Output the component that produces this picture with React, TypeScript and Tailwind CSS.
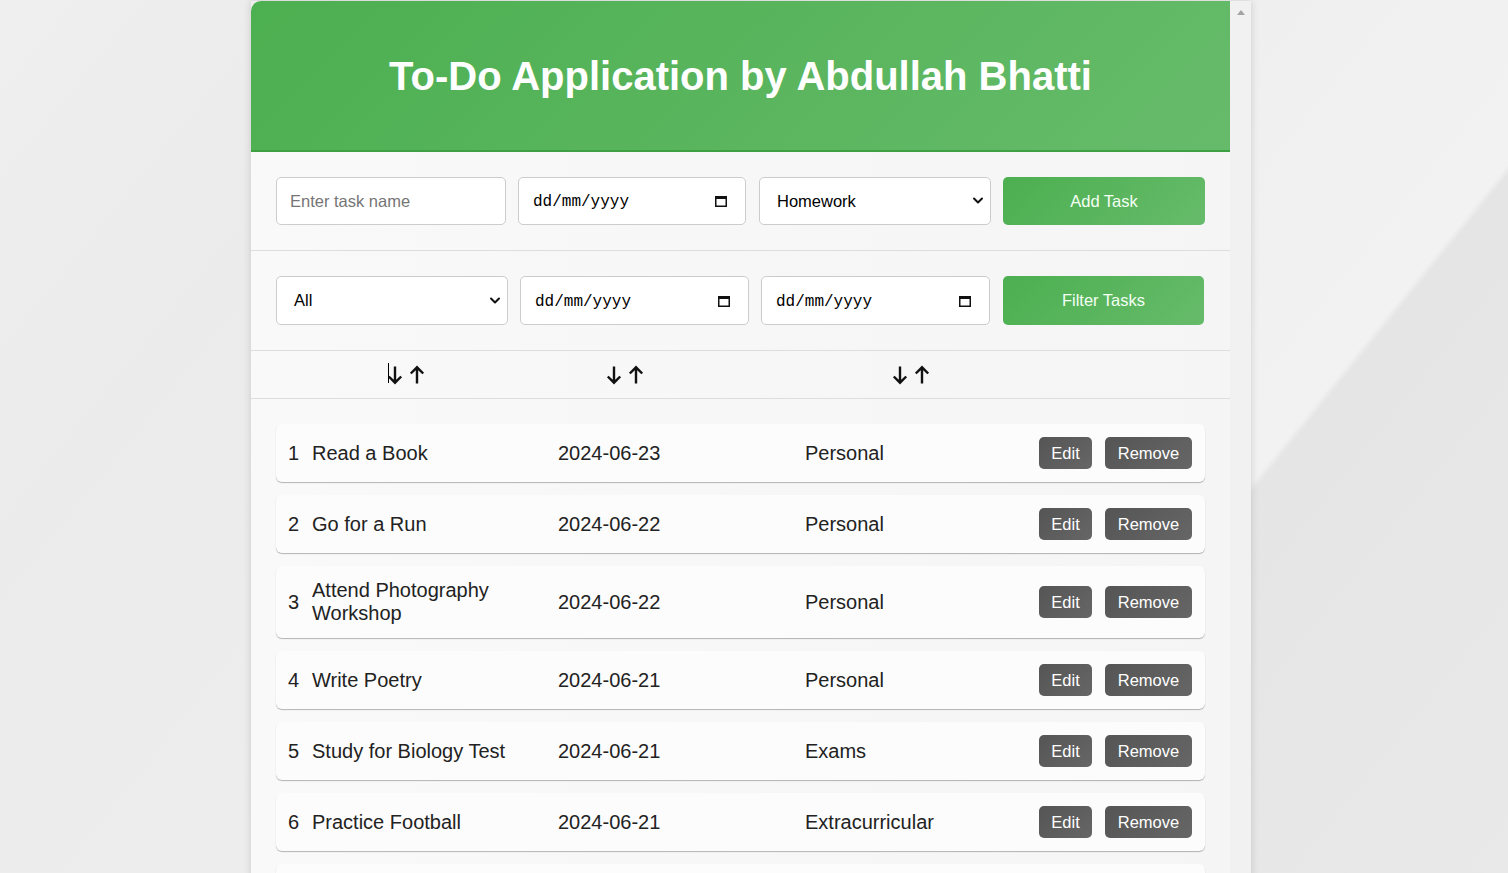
import React from "react";

const tasks = [
  { n: 1, name: "Read a Book", date: "2024-06-23", cat: "Personal" },
  { n: 2, name: "Go for a Run", date: "2024-06-22", cat: "Personal" },
  { n: 3, name: "Attend Photography Workshop", date: "2024-06-22", cat: "Personal" },
  { n: 4, name: "Write Poetry", date: "2024-06-21", cat: "Personal" },
  { n: 5, name: "Study for Biology Test", date: "2024-06-21", cat: "Exams" },
  { n: 6, name: "Practice Football", date: "2024-06-21", cat: "Extracurricular" },
  { n: 7, name: "Science Project", date: "2024-06-20", cat: "Homework" },
];

function Calendar() {
  return (
    <svg width="14" height="14" viewBox="0 0 14 14" className="shrink-0">
      <rect x="1.75" y="2.75" width="10.5" height="9.5" fill="none" stroke="#111" strokeWidth="1.5" />
      <rect x="1" y="2" width="12" height="3" fill="#111" />
    </svg>
  );
}

function Chevron() {
  return (
    <svg width="12" height="8" viewBox="0 0 12 8" className="shrink-0">
      <path d="M2 1.5l4 4 4-4" fill="none" stroke="#111" strokeWidth="2" strokeLinecap="round" strokeLinejoin="round" />
    </svg>
  );
}

function DateBox({ w, h }: { w: string; h: string }) {
  return (
    <div className={`${w} ${h} bg-white border border-[#cccccc] rounded-[5px] flex items-center justify-between pl-[14px] pr-[17px]`}>
      <span className="text-[16px] text-black pt-[2px]" style={{ fontFamily: '"Liberation Mono", monospace' }}>dd/mm/yyyy</span>
      <Calendar />
    </div>
  );
}

function SelectBox({ w, h, label }: { w: string; h: string; label: string }) {
  return (
    <div className={`${w} ${h} bg-white border border-[#cccccc] rounded-[5px] flex items-center justify-between pl-[17px] pr-[6px]`}>
      <span className="text-[16.5px] text-black">{label}</span>
      <Chevron />
    </div>
  );
}

function Arrows() {
  return (
    <div className="flex items-center gap-[6px]">
      <svg width="16" height="20" viewBox="0 0 16 20">
        <path d="M8 1.5v16M1.8 11.5l6.2 6.2 6.2-6.2" fill="none" stroke="#111" strokeWidth="2.4" />
      </svg>
      <svg width="16" height="20" viewBox="0 0 16 20">
        <path d="M8 18.5v-16M1.8 8.5l6.2-6.2 6.2 6.2" fill="none" stroke="#111" strokeWidth="2.4" />
      </svg>
    </div>
  );
}

export default function App() {
  return (
    <div
      className="h-[873px] w-[1508px] overflow-hidden bg-[linear-gradient(128.8deg,#efefef_0%,#ebebeb_20%,#eeeeee_50%,#f2f2f2_74.2%,#e5e5e5_74.6%,#e9e9e9_100%)]"
      style={{ fontFamily: '"Liberation Sans", Arial, sans-serif' }}
    >
      <div className="ml-[251px] mt-[1px] w-[1000px] h-[900px] flex shadow-[0_0_8px_rgba(0,0,0,0.15)]">
        <div className="w-[979px] bg-[linear-gradient(90deg,#f9f9f9,#f5f5f5)] rounded-tl-[10px]">
          <div className="h-[151px] rounded-tl-[10px] bg-[linear-gradient(135deg,#4caf50,#66bb6a)] border-b-2 border-[#3f9f43] flex items-center justify-center">
            <h1 className="text-white font-bold text-[40px] leading-none mt-[1px]">To-Do Application by Abdullah Bhatti</h1>
          </div>

          <div className="px-[25px] py-[25px] border-b border-[#dddddd] flex items-center">
            <div className="w-[230px] h-[48px] bg-white border border-[#cccccc] rounded-[5px] flex items-center pl-[13px]">
              <span className="text-[16.5px] text-[#757575]">Enter task name</span>
            </div>
            <div className="ml-[12px]">
              <DateBox w="w-[228px]" h="h-[48px]" />
            </div>
            <div className="ml-[13px]">
              <SelectBox w="w-[232px]" h="h-[48px]" label="Homework" />
            </div>
            <button className="ml-[12px] w-[202px] h-[48px] rounded-[5px] bg-[linear-gradient(135deg,#4caf50,#66bb6a)] text-[16.5px] text-[#f4fff4]">
              Add Task
            </button>
          </div>

          <div className="px-[25px] py-[25px] border-b border-[#dddddd] flex items-center">
            <SelectBox w="w-[232px]" h="h-[49px]" label="All" />
            <div className="ml-[12px]">
              <DateBox w="w-[229px]" h="h-[49px]" />
            </div>
            <div className="ml-[12px]">
              <DateBox w="w-[229px]" h="h-[49px]" />
            </div>
            <button className="ml-[13px] w-[201px] h-[49px] rounded-[5px] bg-[linear-gradient(135deg,#4caf50,#66bb6a)] text-[16.5px] text-[#f4fff4]">
              Filter Tasks
            </button>
          </div>

          <div className="h-[48px] border-b border-[#dddddd] flex items-center">
            <div className="ml-[136px] relative">
              <Arrows />
              <span className="absolute left-[1px] top-[-2px] w-[1px] h-[20px] bg-black" />
            </div>
            <div className="ml-[181px]">
              <Arrows />
            </div>
            <div className="ml-[248px]">
              <Arrows />
            </div>
          </div>

          <div className="px-[25px] pt-[25px] flex flex-col gap-[13px]">
            {tasks.map((t) => (
              <div
                key={t.n}
                className="bg-[#fcfcfc] rounded-[6px] shadow-[0_1px_1px_rgba(0,0,0,0.28)] py-[13px] pl-[12px] pr-[13px] flex items-center text-[20px] leading-[23px] text-[#222222]"
              >
                <span className="w-[24px] shrink-0">{t.n}</span>
                <span className="w-[234px] mr-[12px] shrink-0">{t.name}</span>
                <span className="w-[247px] shrink-0">{t.date}</span>
                <span className="flex-1">{t.cat}</span>
                <div className="flex items-center gap-[13px]">
                  <button className="w-[53px] h-[32px] rounded-[5px] bg-[linear-gradient(135deg,#555555,#666666)] text-white text-[16.5px]">
                    Edit
                  </button>
                  <button className="w-[87px] h-[32px] rounded-[5px] bg-[linear-gradient(135deg,#555555,#666666)] text-white text-[16.5px]">
                    Remove
                  </button>
                </div>
              </div>
            ))}
          </div>
        </div>
        <div className="w-[21px] bg-[#f1f1f1] flex justify-center pt-[9px]">
          <div className="w-0 h-0 border-l-[4px] border-r-[4px] border-b-[5px] border-l-transparent border-r-transparent border-b-[#a3a3a3]" />
        </div>
      </div>
    </div>
  );
}
